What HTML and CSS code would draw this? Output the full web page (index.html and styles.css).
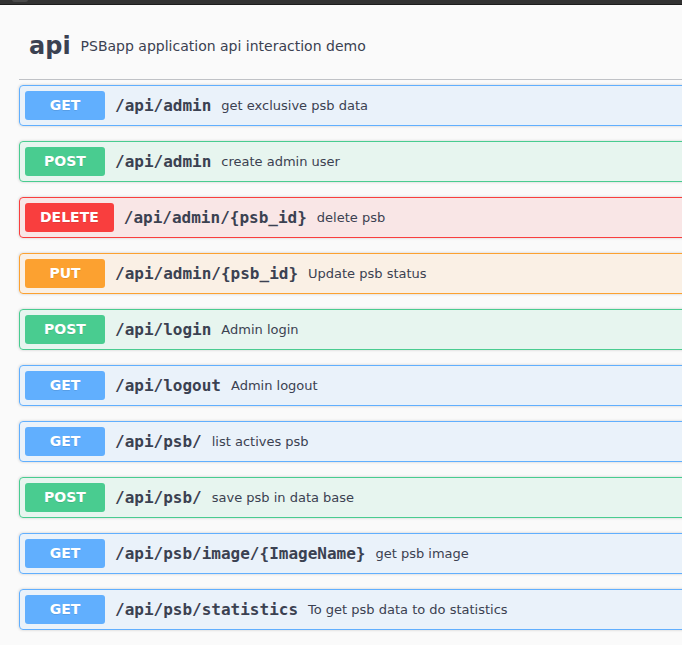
FILE: index.html
```html
<!DOCTYPE html>
<html>
<head>
<meta charset="utf-8">
<link rel="stylesheet" href="styles.css">
</head>
<body>
<div class="topbar"><span class="knob"></span></div>
<div class="wrap">
  <h3 class="tag"><span class="tag-name">api</span><small class="tag-desc">PSBapp application api interaction demo</small></h3>

  <div class="opblock get"><div class="summary"><span class="method">GET</span><span class="path">/api/admin</span><span class="desc">get exclusive psb data</span></div></div>
  <div class="opblock post"><div class="summary"><span class="method">POST</span><span class="path">/api/admin</span><span class="desc">create admin user</span></div></div>
  <div class="opblock delete"><div class="summary"><span class="method">DELETE</span><span class="path">/api/admin/{psb_id}</span><span class="desc">delete psb</span></div></div>
  <div class="opblock put"><div class="summary"><span class="method">PUT</span><span class="path">/api/admin/{psb_id}</span><span class="desc">Update psb status</span></div></div>
  <div class="opblock post"><div class="summary"><span class="method">POST</span><span class="path">/api/login</span><span class="desc">Admin login</span></div></div>
  <div class="opblock get"><div class="summary"><span class="method">GET</span><span class="path">/api/logout</span><span class="desc">Admin logout</span></div></div>
  <div class="opblock get"><div class="summary"><span class="method">GET</span><span class="path">/api/psb/</span><span class="desc">list actives psb</span></div></div>
  <div class="opblock post"><div class="summary"><span class="method">POST</span><span class="path">/api/psb/</span><span class="desc">save psb in data base</span></div></div>
  <div class="opblock get"><div class="summary"><span class="method">GET</span><span class="path">/api/psb/image/{ImageName}</span><span class="desc">get psb image</span></div></div>
  <div class="opblock get"><div class="summary"><span class="method">GET</span><span class="path">/api/psb/statistics</span><span class="desc">To get psb data to do statistics</span></div></div>
</div>
</body>
</html>
```

FILE: styles.css
```css
html, body {
  margin: 0;
  padding: 0;
  background: #fafafa;
  overflow: hidden;
  font-family: "DejaVu Sans", sans-serif;
  color: #3b4151;
}

.topbar {
  height: 4px;
  background: #323232;
  border-bottom: 1px solid #1c1c1c;
  position: relative;
}

.knob {
  position: absolute;
  left: 12px;
  top: -3px;
  width: 16px;
  height: 5px;
  border-radius: 3px;
  background: #4a4a4a;
}

.wrap {
  width: 1100px;
  padding-left: 19px;
}

.tag {
  display: flex;
  align-items: center;
  margin: 0 0 5px;
  padding: 27px 20px 19px 10px;
  border-bottom: 1px solid rgba(59, 65, 81, 0.3);
  font-size: 24px;
  line-height: 28px;
  font-weight: bold;
}

.tag-desc {
  padding: 0 10px;
  font-size: 14px;
  font-weight: normal;
  line-height: 18px;
}

.opblock {
  margin: 0 0 15px;
  border: 1px solid #000;
  border-radius: 4px;
  box-shadow: 0 0 3px rgba(0, 0, 0, 0.19);
}

.summary {
  display: flex;
  align-items: center;
  padding: 5px;
}

.method {
  min-width: 80px;
  box-sizing: border-box;
  padding: 6px 15px;
  font-size: 14px;
  line-height: 17px;
  font-weight: bold;
  text-align: center;
  color: #fff;
  border-radius: 3px;
  text-shadow: 0 1px 0 rgba(0, 0, 0, 0.1);
}

.path {
  padding: 0 10px;
  font-family: "DejaVu Sans Mono", monospace;
  font-size: 16px;
  font-weight: bold;
  color: #3b4151;
}

.desc {
  font-size: 13px;
  color: #3b4151;
}

.get { background: rgba(97, 175, 254, 0.1); border-color: #61affe; }
.get .method { background: #61affe; }
.post { background: rgba(73, 204, 144, 0.1); border-color: #49cc90; }
.post .method { background: #49cc90; }
.delete { background: rgba(249, 62, 62, 0.1); border-color: #f93e3e; }
.delete .method { background: #f93e3e; }
.put { background: rgba(252, 161, 48, 0.1); border-color: #fca130; }
.put .method { background: #fca130; }
```
